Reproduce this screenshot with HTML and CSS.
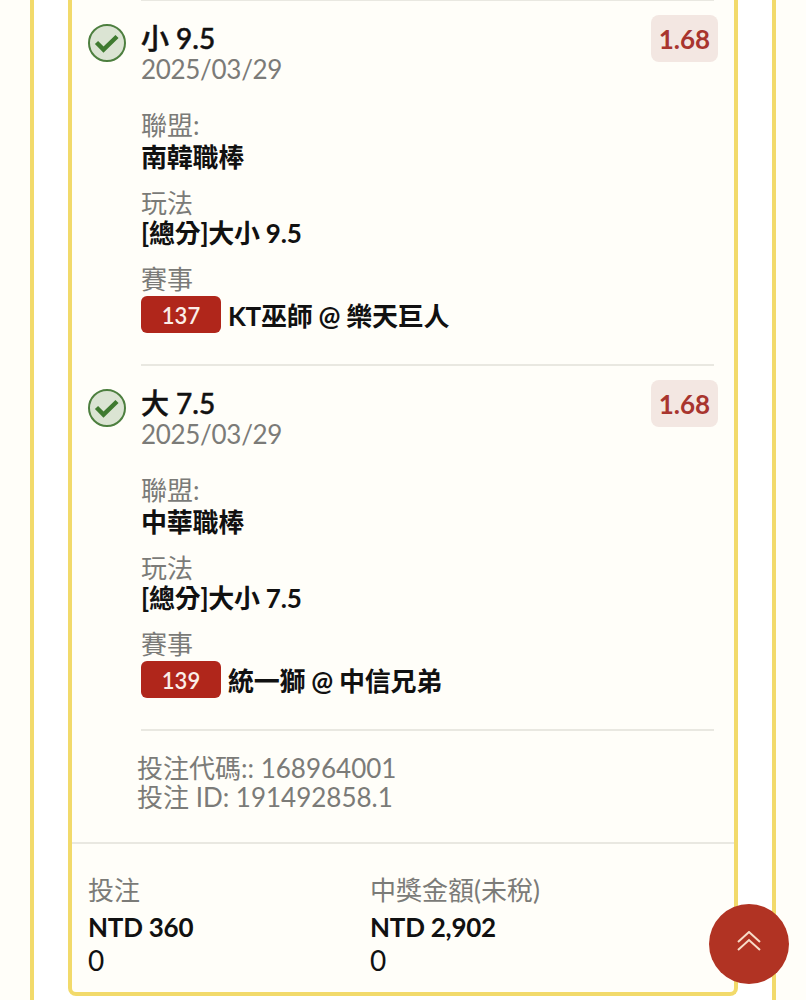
FILE: index.html
```html
<!DOCTYPE html>
<html lang="zh-Hant">
<head>
<meta charset="utf-8">
<title>投注</title>
<link rel="stylesheet" href="styles.css">
</head>
<body>
<div class="shell">
  <div class="card">
    <div class="bets">
      <div class="bet">
        <svg class="check" viewBox="0 0 38 38"><circle cx="19" cy="19" r="18" fill="#dbe4d3" stroke="#4d7f3f" stroke-width="2"/><path d="M8.500 18.500L15.500 25.500L29 12.500" fill="none" stroke="#3f7a30" stroke-width="4.500"/></svg>
        <div class="bet-main">
          <div class="bet-head">
            <div>
              <div class="title">小 9.5</div>
              <div class="muted date">2025/03/29</div>
            </div>
            <div class="odds">1.68</div>
          </div>
          <div class="field first"><div class="muted">聯盟:</div><div class="strong league">南韓職棒</div></div>
          <div class="field"><div class="muted">玩法</div><div class="strong">[總分]大小 9.5</div></div>
          <div class="field"><div class="muted">賽事</div><div class="match"><span class="tag">137</span><span class="strong teams">KT巫師 @ 樂天巨人</span></div></div>
        </div>
      </div>
      <div class="bet">
        <svg class="check" viewBox="0 0 38 38"><circle cx="19" cy="19" r="18" fill="#dbe4d3" stroke="#4d7f3f" stroke-width="2"/><path d="M8.500 18.500L15.500 25.500L29 12.500" fill="none" stroke="#3f7a30" stroke-width="4.500"/></svg>
        <div class="bet-main">
          <div class="bet-head">
            <div>
              <div class="title">大 7.5</div>
              <div class="muted date">2025/03/29</div>
            </div>
            <div class="odds">1.68</div>
          </div>
          <div class="field first"><div class="muted">聯盟:</div><div class="strong league">中華職棒</div></div>
          <div class="field"><div class="muted">玩法</div><div class="strong">[總分]大小 7.5</div></div>
          <div class="field"><div class="muted">賽事</div><div class="match"><span class="tag">139</span><span class="strong teams">統一獅 @ 中信兄弟</span></div></div>
        </div>
      </div>
      <div class="codes">
        <div class="muted">投注代碼:: 168964001</div>
        <div class="muted">投注 ID: 191492858.1</div>
      </div>
    </div>
    <div class="totals">
      <div class="total">
        <div class="muted">投注</div>
        <div class="strong">NTD 360</div>
        <div class="plain">0</div>
      </div>
      <div class="total">
        <div class="muted">中獎金額(未稅)</div>
        <div class="strong">NTD 2,902</div>
        <div class="plain">0</div>
      </div>
    </div>
  </div>
</div>
<button class="to-top" type="button" aria-label="top">
  <svg viewBox="0 0 24 20"><path d="M1 11L12 1L23 11M1 19L12 9L23 19" fill="none" stroke="#f8dcc8" stroke-width="2"/></svg>
</button>
</body>
</html>
```
FILE: styles.css
```css
* { box-sizing: border-box; }
html, body { margin: 0; padding: 0; height: 1000px; overflow: hidden; }
body {
  background: #fffef9;
  color: #111;
  font-family: Lato, "Noto Sans CJK TC", sans-serif;
  font-size: 26px;
  line-height: 30px;
}
.shell {
  margin: 0 30px;
  height: 1000px;
  padding: 0 34px;
  background: #fff;
  border-left: 4px solid #f2da6b;
  border-right: 4px solid #f2da6b;
}
.card {
  height: 996px;
  background: #fffef9;
  border: 4px solid #f2da6b;
  border-top: 0;
  border-radius: 0 0 8px 8px;
}
.bets { padding: 0 20px 0 16px; }
.bet {
  display: flex;
  gap: 15px;
  height: 365px;
}
.check { width: 38px; height: 38px; margin-top: 24px; flex: none; }
.bet-main {
  flex: 1;
  margin-top: -1px;
  border-top: 2px solid #e9e8e1;
  padding-top: 22px;
  min-width: 0;
}
.bet-head { display: flex; justify-content: space-between; align-items: flex-start; margin-right: -4px; }
.title { font-size: 28px; font-weight: 500; -webkit-text-stroke: 0.500px #111; line-height: 31px; color: #111; }
.date { letter-spacing: -0.300px; }
.muted { color: #7b7b78; }
.strong { font-weight: 700; color: #111; letter-spacing: -0.250px; }
.league { margin-top: 2px; }
.plain { color: #111; margin-top: 3px; font-size: 28px; }
.odds {
  width: 67px;
  height: 47px;
  margin-top: -8px;
  background: #f3e7e2;
  border-radius: 8px;
  color: #a8352e;
  font-weight: 700;
  font-size: 26px;
  line-height: 49px;
  text-align: center;
}
.field { margin-top: 16px; }
.field.first { margin-top: 26px; }
.match { display: flex; align-items: center; gap: 7px; margin-top: 2px; }
.teams { padding-top: 2px; }
.tag {
  width: 80px;
  height: 37px;
  background: #b0261b;
  border-radius: 6px;
  color: #fbeee8;
  font-size: 22px;
  font-weight: 600;
  line-height: 39px;
  text-align: center;
}
.codes {
  margin-left: 53px;
  margin-top: -1px;
  padding-top: 23px;
  border-top: 2px solid #e9e8e1;
  line-height: 29px;
}
.codes .muted { margin-left: -4px; }
.totals {
  margin-top: 30px;
  border-top: 2px solid #e9e8e1;
  padding: 31px 16px 0;
  display: grid;
  grid-template-columns: 282px 1fr;
}
.total .strong { margin-top: 7px; }
.to-top {
  position: fixed;
  left: 709px;
  top: 904px;
  width: 80px;
  height: 80px;
  border: 0;
  border-radius: 50%;
  background: #b13323;
  padding: 0 0 6px;
  display: flex;
  align-items: center;
  justify-content: center;
}
.to-top svg { width: 24px; height: 20px; }
```
